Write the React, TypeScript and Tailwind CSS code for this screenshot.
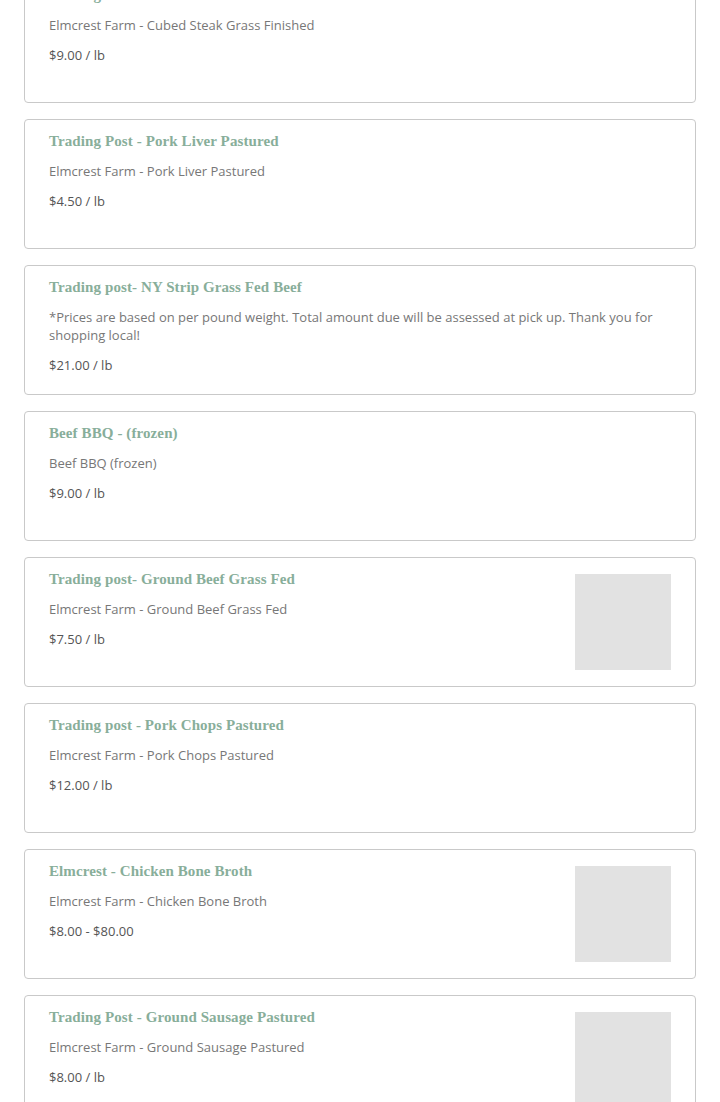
const products = [
  {
    title: "Trading Post - Cubed Steak Grass Finished",
    desc: "Elmcrest Farm - Cubed Steak Grass Finished",
    price: "$9.00 / lb",
    image: false,
  },
  {
    title: "Trading Post - Pork Liver Pastured",
    desc: "Elmcrest Farm - Pork Liver Pastured",
    price: "$4.50 / lb",
    image: false,
  },
  {
    title: "Trading post- NY Strip Grass Fed Beef",
    desc: "*Prices are based on per pound weight. Total amount due will be assessed at pick up. Thank you for shopping local!",
    price: "$21.00 / lb",
    image: false,
  },
  {
    title: "Beef BBQ - (frozen)",
    desc: "Beef BBQ (frozen)",
    price: "$9.00 / lb",
    image: false,
  },
  {
    title: "Trading post- Ground Beef Grass Fed",
    desc: "Elmcrest Farm - Ground Beef Grass Fed",
    price: "$7.50 / lb",
    image: true,
  },
  {
    title: "Trading post - Pork Chops Pastured",
    desc: "Elmcrest Farm - Pork Chops Pastured",
    price: "$12.00 / lb",
    image: false,
  },
  {
    title: "Elmcrest - Chicken Bone Broth",
    desc: "Elmcrest Farm - Chicken Bone Broth",
    price: "$8.00 - $80.00",
    image: true,
  },
  {
    title: "Trading Post - Ground Sausage Pastured",
    desc: "Elmcrest Farm - Ground Sausage Pastured",
    price: "$8.00 / lb",
    image: true,
  },
];

function ProductCard({ p }: { p: (typeof products)[number] }) {
  return (
    <div className="flex justify-between gap-6 min-h-[130px] border border-[#c9c9c9] rounded-[4px] bg-white pt-[11px] pb-4 px-6">
      <div className="flex flex-col min-w-0">
        <h3 className="font-['Liberation_Serif',serif] font-bold text-[15px] leading-[20px] tracking-[0.1px] text-[#88ae9a]">
          {p.title}
        </h3>
        <p className="mt-[11px] font-['Open_Sans',sans-serif] text-[13px] leading-[18px] text-[#777777]">
          {p.desc}
        </p>
        <p className="mt-3 font-['Open_Sans',sans-serif] text-[13px] leading-[18px] text-[#555555]">
          {p.price}
        </p>
      </div>
      {p.image && <div className="mt-[5px] w-24 h-24 shrink-0 bg-[#e2e2e2]" />}
    </div>
  );
}

export default function App() {
  return (
    <div className="min-h-screen bg-white px-6 overflow-hidden">
      <div className="flex flex-col gap-4 -mt-[27px] pb-6">
        {products.map((p, i) => (
          <ProductCard key={i} p={p} />
        ))}
      </div>
    </div>
  );
}
